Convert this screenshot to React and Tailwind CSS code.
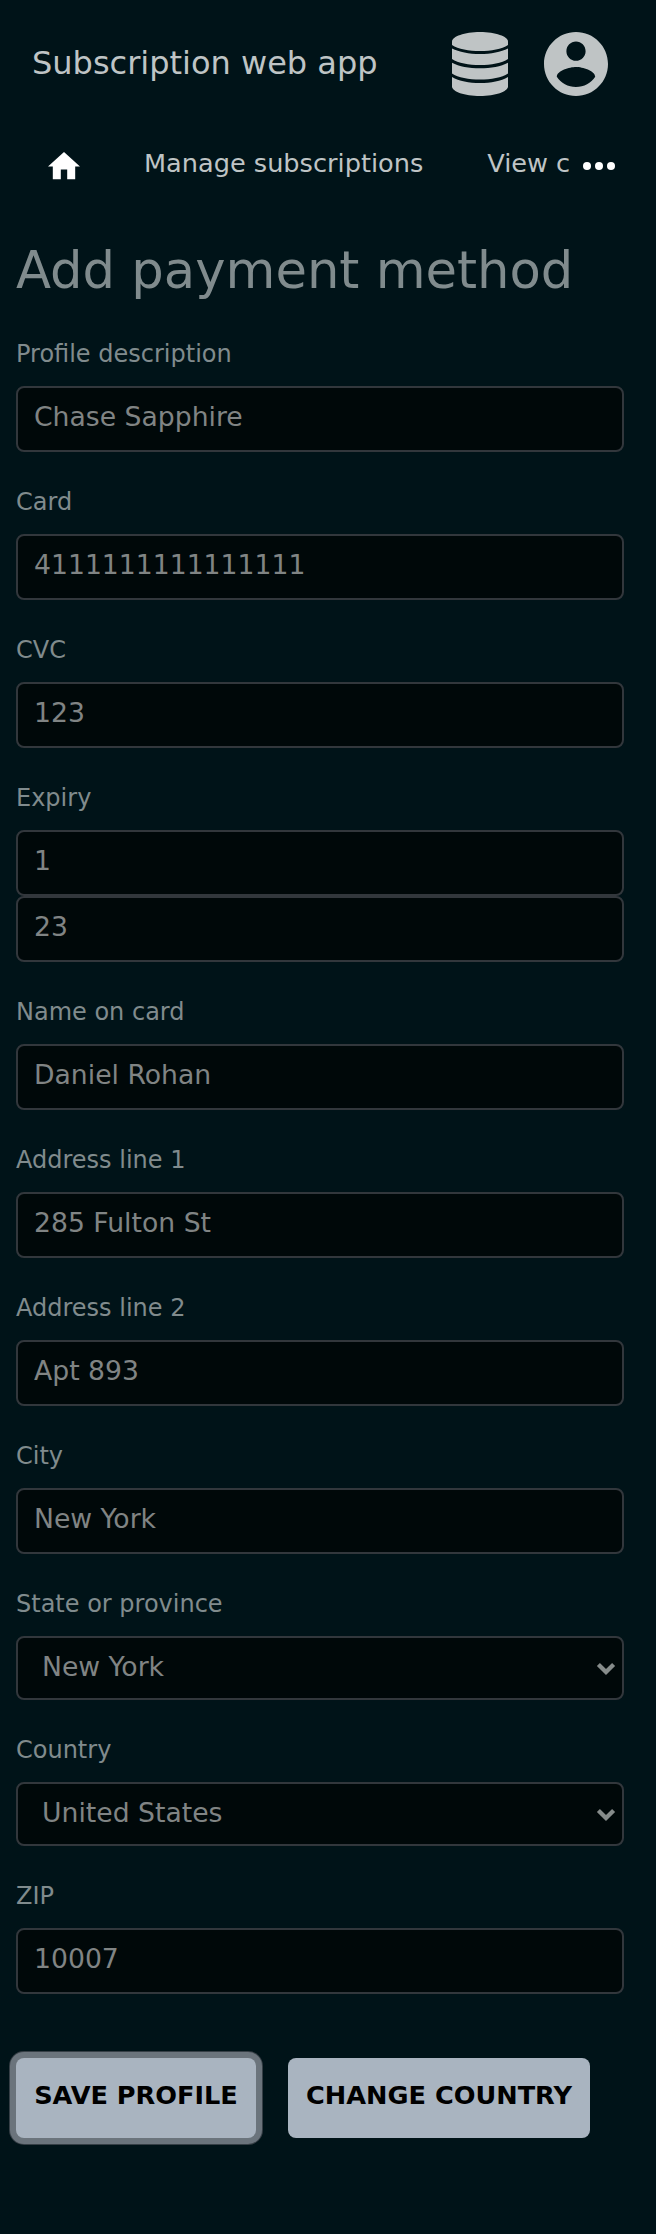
const inputBox =
  "block w-full rounded-lg border-2 border-[#32373c] bg-[#000809] text-[26.667px] text-[#808484] outline-none";

function Field({ label, children }) {
  return (
    <div className="flex flex-col">
      <label className="h-8 text-[24px] leading-8 text-[#808b8d]">{label}</label>
      <div className="mt-[16px] flex flex-col">{children}</div>
    </div>
  );
}

function TextInput({ value }) {
  return (
    <input
      className={`${inputBox} h-[66px] pt-0 pb-[6px] pl-4 pr-4`}
      defaultValue={value}
    />
  );
}

function Select({ value }) {
  return (
    <div className={`${inputBox} flex h-16 items-center justify-between pr-[6px] pl-[24px]`}>
      <span className="mb-[2px] leading-8">{value}</span>
      <svg className="mt-[2px] h-[14px] w-5" viewBox="0 0 20 14" fill="none" stroke="#868c8b" strokeWidth="4.300">
        <path d="M2.400 2.400 10 10 17.600 2.400" />
      </svg>
    </div>
  );
}

function DatabaseIcon() {
  return (
    <svg className="h-16 w-14" viewBox="0 0 56 64" fill="currentColor">
      <path d="M28 0C43.500 0 56 4.500 56 9.500V13C50 17 39 19 28 19S6 17 0 13V9.500C0 4.500 12.500 0 28 0Z" />
      <path d="M0 16.500C7 20 17 22 28 22S49 20 56 16.500V27C50 31 39 33 28 33S6 31 0 27Z" />
      <path d="M0 30.700C7 34.500 17 36.300 28 36.300S49 34.500 56 30.700V41.500C50 45.500 39 47.500 28 47.500S6 45.500 0 41.500Z" />
      <path d="M0 45C7 49 17 51 28 51S49 49 56 45V54.500C56 59.500 43.500 64 28 64S0 59.500 0 54.500Z" />
    </svg>
  );
}

function Header() {
  return (
    <header className="flex h-32 items-center pr-12 pl-8 text-[#bfc4c5]">
      <h1 className="mb-[2px] flex-1 text-[32px] leading-9">Subscription web app</h1>
      <DatabaseIcon />
      <svg className="ml-9 h-16 w-16" viewBox="2 2 20 20" fill="currentColor">
        <path d="M12 2C6.480 2 2 6.480 2 12s4.480 10 10 10 10-4.480 10-10S17.520 2 12 2zm0 3c1.660 0 3 1.340 3 3s-1.340 3-3 3-3-1.340-3-3 1.340-3 3-3zm0 14.200c-2.500 0-4.710-1.280-6-3.220.030-1.990 4-3.080 6-3.080 1.990 0 5.970 1.090 6 3.080-1.290 1.940-3.500 3.220-6 3.220z" />
      </svg>
    </header>
  );
}

function Nav() {
  return (
    <nav className="flex h-[72px] items-center text-[25.600px] text-[#bfc4c5]">
      <svg className="mt-1 ml-12 h-[27.200px] w-8 text-white" viewBox="2 3 20 17" fill="currentColor">
        <path d="M10 20v-6h4v6h5v-8h3L12 3 2 12h3v8z" />
      </svg>
      <span className="mb-[3px] ml-16 leading-8 whitespace-nowrap">Manage subscriptions</span>
      <span className="mb-[3px] ml-16 w-[82px] leading-8 whitespace-nowrap">View c</span>
      <svg className="mt-1 ml-[14px] h-2 w-8 text-white" viewBox="0 0 32 8" fill="currentColor">
        <circle cx="4" cy="4" r="4" />
        <circle cx="16" cy="4" r="4" />
        <circle cx="28" cy="4" r="4" />
      </svg>
    </nav>
  );
}

const buttonBox =
  "h-20 rounded-lg bg-[#a9b4c0] pb-[6px] text-center text-[25.600px] font-bold whitespace-nowrap text-black";

export default function App() {
  return (
    <div className="h-[2234px] w-[656px] overflow-hidden bg-[#001318] font-['DejaVu_Sans',sans-serif]">
      <Header />
      <Nav />
      <main className="pr-8 pl-4">
        <h2 className="mt-[38px] h-16 text-[51.200px] leading-[64px] text-[#808b8d]">Add payment method</h2>
        <form className="mt-9 flex flex-col gap-[34px]">
          <Field label="Profile description"><TextInput value="Chase Sapphire" /></Field>
          <Field label="Card"><TextInput value="4111111111111111" /></Field>
          <Field label="CVC"><TextInput value="123" /></Field>
          <Field label="Expiry">
            <TextInput value="1" />
            <TextInput value="23" />
          </Field>
          <Field label="Name on card"><TextInput value="Daniel Rohan" /></Field>
          <Field label="Address line 1"><TextInput value="285 Fulton St" /></Field>
          <Field label="Address line 2"><TextInput value="Apt 893" /></Field>
          <Field label="City"><TextInput value="New York" /></Field>
          <Field label="State or province"><Select value="New York" /></Field>
          <Field label="Country"><Select value="United States" /></Field>
          <Field label="ZIP"><TextInput value="10007" /></Field>
        </form>
        <div className="mt-16 flex gap-8">
          <button className={`${buttonBox} w-[240px] shadow-[0_0_0_6px_#6b747c,0_0_0_7px_#363f46]`}>SAVE PROFILE</button>
          <button className={`${buttonBox} w-[302px]`}>CHANGE COUNTRY</button>
        </div>
      </main>
    </div>
  );
}
